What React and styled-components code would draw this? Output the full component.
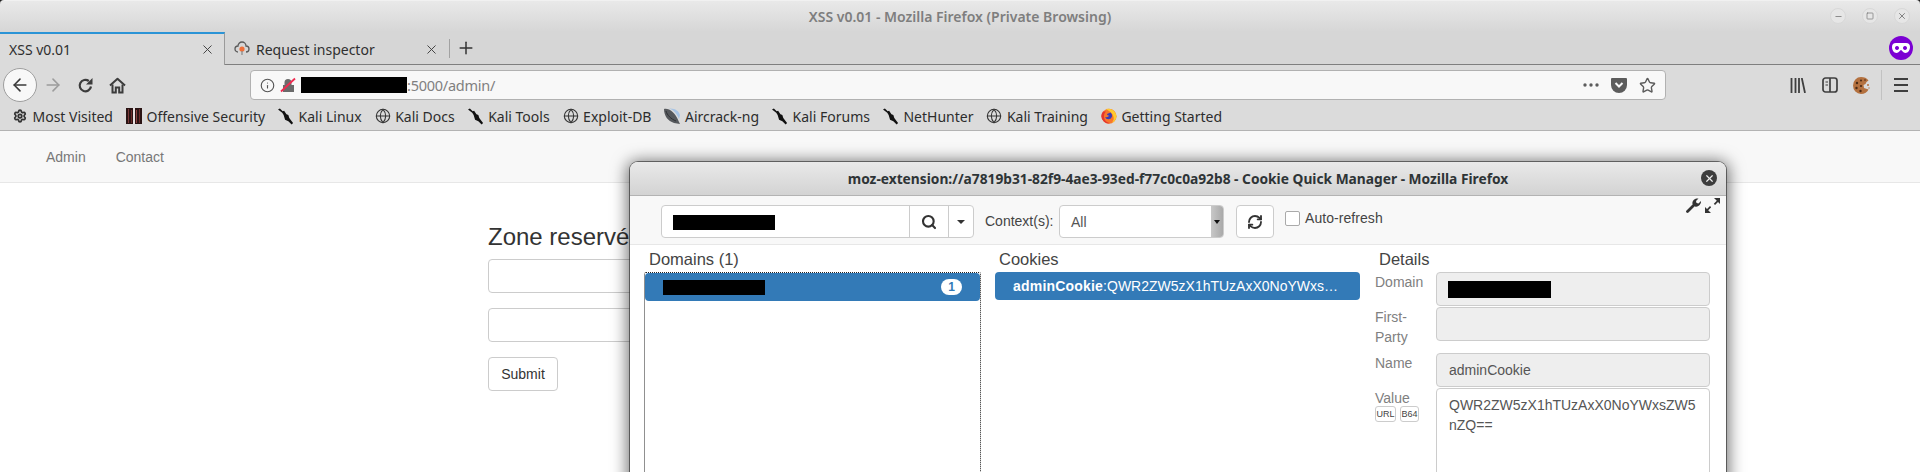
import React from 'react';
import styled, { createGlobalStyle } from 'styled-components';
import { ArrowLeft, ArrowRight, Info, Star, X, Plus, Minus, Square, Settings, Globe, Search, RefreshCw } from 'lucide-react';

const Global = createGlobalStyle`
  html, body { margin: 0; padding: 0; background: #fff; }
  * { box-sizing: border-box; }
`;
const Page = styled.div`
  position: relative; width: 1920px; height: 472px; overflow: hidden;
  font-family: "Liberation Sans", Arial, sans-serif; font-size: 14px; color: #333; background: #fff;
`;
const Chrome = styled.div`
  font-family: "Noto Sans", sans-serif; background: #dbdbdb; border-bottom: 1px solid #b3b3b3;
`;
const TitleFrame = styled.div`background: #1c1c1c;`;
const TitleBar = styled.div`
  position: relative; height: 32px; display: flex; align-items: center; justify-content: center;
  background: linear-gradient(#e9e9e9, #d6d6d6); border-top: 1px solid #f1f1f1; border-radius: 4px 4px 0 0;
`;
const TitleText = styled.div`
  font-size: 14px; font-weight: 600; color: #7e7e7e;
`;
const WindowControls = styled.div`
  position: absolute; right: 10px; top: 7px; display: flex; gap: 16px;
`;
const WindowButton = styled.div`
  width: 16px; height: 16px; border-radius: 50%; background: #e6e6e6; border: 1px solid #d8d8d8;
  display: flex; align-items: center; justify-content: center; color: #6f6f6f;
`;
const TabBar = styled.div`
  height: 33px; display: flex; align-items: stretch; background: #d6d6d6; border-bottom: 1px solid #7f7f7f;
`;
const Tab = styled.div`
  width: ${p => p.$width}px; height: ${p => p.$active ? 33 : 32}px; display: flex; align-items: center;
  padding: 0 9px; font-size: 14px; color: #2f2f2f; gap: 6px; z-index: 1;
  background: ${p => p.$active ? '#dbdbdb' : 'transparent'};
  border-top: ${p => p.$active ? '2px solid #2b94d6' : '2px solid transparent'};
  border-right: ${p => p.$active ? '1px solid #9a9a9a' : '1px solid transparent'};
`;
const TabTitle = styled.span`flex: 1;`;
const TabClose = styled.span`display: flex; color: #3c3c3c;`;
const TabDivider = styled.div`width: 1px; height: 19px; align-self: center; background: #a2a2a2;`;
const NewTab = styled.div`width: 32px; display: flex; align-items: center; justify-content: center; color: #333;`;
const PrivateSlot = styled.div`margin-left: auto; margin-right: 7px; display: flex; align-items: center;`;
const PrivateMask = styled.div`
  width: 24px; height: 24px; border-radius: 50%; background: #7b00d3; display: flex; align-items: center; justify-content: center;
`;
const NavRow = styled.div`height: 40px; display: flex; align-items: center; padding-left: 3px;`;
const BackButton = styled.div`
  width: 34px; height: 34px; border-radius: 50%; background: #f8f8f8; border: 1px solid #9e9e9e;
  display: flex; align-items: center; justify-content: center; color: #3a3a3a;
`;
const NavButton = styled.div`
  width: 32px; height: 32px; display: flex; align-items: center; justify-content: center;
  color: ${p => p.$disabled ? '#9c9c9c' : '#3c3c3c'};
`;
const AddressBar = styled.div`
  margin-left: 117px; width: 1416px; height: 30px; background: #f8f8f8; border: 1px solid #b1b1b1; border-radius: 4px;
  display: flex; align-items: center; padding: 0 4px 0 9px; color: #7f7f7f;
`;
const InfoSlot = styled.span`display: flex; width: 20px; color: #555;`;
const LockSlot = styled.span`display: flex; width: 21px;`;
const Redacted = styled.div`
  width: ${p => p.$w}px; height: ${p => p.$h}px; background: #000; flex: none;
`;
const AddressTail = styled.span`color: #808080; font-size: 14.500px; letter-spacing: -0.25px;`;
const AddressActions = styled.div`margin-left: auto; display: flex; align-items: center;`;
const ActionSlot = styled.div`width: 28px; display: flex; justify-content: center; align-items: center; color: #5c5c5c;`;
const RightTools = styled.div`margin-left: auto; padding-right: 3px; display: flex; align-items: center;`;
const ToolDivider = styled.div`width: 1px; height: 30px; background: #c2c2c2; margin: 0 3px;`;
const BookmarkRow = styled.div`height: 25px; padding: 0 0 3px 12px; display: flex; align-items: center; gap: 13px;`;
const Bookmark = styled.div`display: flex; align-items: center; gap: 4.500px; font-size: 14px; color: #2d2d2d; white-space: nowrap;`;
const BookmarkIcon = styled.span`display: flex; width: 16px; height: 16px; flex: none; color: #333; align-items: center; justify-content: center;`;

const NavBar = styled.div`
  height: 52px; background: #f8f8f8; border-bottom: 1px solid #e7e7e7; display: flex; align-items: center;
  padding-left: 46px; gap: 30px; color: #777;
`;
const FormArea = styled.div`
  padding: 0 0 0 488px; width: 900px;
`;
const Heading = styled.h3`
  margin: 41px 0 9px; font-size: 24px; font-weight: 500; line-height: 26px; color: #333;
`;
const Field = styled.div`
  height: 34px; border: 1px solid #ccc; border-radius: 4px; margin-bottom: 15px; background: #fff;
`;
const SubmitButton = styled.div`
  width: 70px; height: 34px; border: 1px solid #ccc; border-radius: 4px; display: flex; align-items: center; justify-content: center; color: #333;
`;

const Popup = styled.div`
  position: absolute; left: 630px; top: 162px; width: 1096px; height: 420px; background: #fff;
  border-radius: 8px 8px 0 0; box-shadow: 0 2px 16px 3px rgba(0,0,0,.55), 0 0 0 1px rgba(70,70,70,.65);
  overflow: hidden; color: #333;
`;
const PopupTitle = styled.div`
  position: relative; height: 34px; background: linear-gradient(#e9e9e9, #d3d3d3); border-bottom: 1px solid #b3b3b3;
  display: flex; align-items: center; justify-content: center;
  font-family: "Noto Sans", sans-serif; font-weight: 700; font-size: 13.750px; color: #2e3436;
`;
const PopupClose = styled.div`
  position: absolute; right: 9px; top: 8px; width: 16px; height: 16px; border-radius: 50%; background: #3d3d3d; color: #eee;
  display: flex; align-items: center; justify-content: center;
`;
const Toolbar = styled.div`
  height: 49px; background: #f8f8f8; border-bottom: 1px solid #e7e7e7; padding: 9px 6px 0 31px; display: flex; align-items: flex-start;
`;
const SearchGroup = styled.div`
  display: flex; width: 313px; height: 33px; border: 1px solid #ccc; border-radius: 4px; background: #fff;
`;
const SearchInput = styled.div`flex: 1; display: flex; align-items: center; padding-left: 11px; padding-top: 1px;`;
const GroupButton = styled.div`
  width: ${p => p.$w}px; border-left: 1px solid #ccc; display: flex; align-items: center; justify-content: center; color: #333;
`;
const Caret = styled.span`width: 0; height: 0; border-left: 4px solid transparent; border-right: 4px solid transparent; border-top: 4px solid #333;`;
const ContextLabel = styled.span`margin: 8px 0 0 11px; width: 74px; line-height: 16px; color: #444;`;
const ContextSelect = styled.div`
  width: 165px; height: 33px; border: 1px solid #ccc; border-radius: 4px; background: #fff; display: flex; align-items: center; padding-left: 11px; color: #555;
  overflow: hidden; justify-content: space-between;
`;
const SelectArrow = styled.div`
  width: 12px; height: 100%; background: linear-gradient(90deg, #c8c8c8, #a9a9a9); display: flex; align-items: center; justify-content: center;
`;
const SmallCaret = styled.span`width: 0; height: 0; border-left: 3px solid transparent; border-right: 3px solid transparent; border-top: 4px solid #111;`;
const RefreshButton = styled.div`
  margin-left: 12px; width: 38px; height: 33px; border: 1px solid #ccc; border-radius: 4px; background: #fff; display: flex; align-items: center; justify-content: center;
`;
const AutoRefresh = styled.div`margin: 5px 0 0 11px; display: flex; align-items: center; gap: 5px; color: #444; letter-spacing: .06px;`;
const Check = styled.span`width: 15px; height: 15px; background: #fff; border: 1px solid #aaa; border-radius: 2px;`;
const CornerTools = styled.div`margin: -7px 0 0 auto; display: flex; gap: 4px; color: #333;`;
const Columns = styled.div`
  display: grid; grid-template-columns: 337px 366px 335px; column-gap: 14px; padding-left: 14px;
`;
const ColumnLabel = styled.div`
  height: 27px; line-height: 28px; padding-left: ${p => p.$pad}px; font-size: 16.500px; color: #444;
`;
const DomainList = styled.div`
  height: 300px; border: 1px dotted #222; border-radius: 2px;
`;
const SelectedRow = styled.div`
  height: 28px; background: #337ab7; border-radius: 4px; color: #fff; display: flex; align-items: center;
  padding: 0 18px 0 ${p => p.$pad}px; justify-content: space-between; margin-right: ${p => p.$mr || 0}px;
`;
const Badge = styled.span`
  min-width: 21px; height: 16px; border-radius: 10px; background: #fff; color: #337ab7; font-size: 12px; font-weight: 700; text-align: center; line-height: 16px;
`;
const CookieValue = styled.span`white-space: nowrap; overflow: hidden; text-overflow: ellipsis; width: 100%;`;
const CookieName = styled.b`font-weight: 700; letter-spacing: .2px;`;
const DetailGrid = styled.div`display: grid; grid-template-columns: 61px 274px;`;
const DetailLabel = styled.div`line-height: 20px; color: #808080;`;
const ReadOnly = styled.div`
  height: 34px; background: #eee; border: 1px solid #ccc; border-radius: 4px; padding: 0 11px; display: flex; align-items: center; color: #555;
  margin-bottom: ${p => p.$mb}px;
`;
const NameText = styled.span`padding-left: 1px;`;
const ValueBox = styled.div`
  height: 200px; border: 1px solid #ccc; border-radius: 4px; padding: 6px 12px; line-height: 20px; color: #555; word-break: break-all; background: #fff;
`;
const CodecRow = styled.div`display: flex; gap: 4px; margin-top: -2px;`;
const Codec = styled.span`
  width: ${p => p.$w}px; height: 16px; border: 1px solid #ccc; border-radius: 3px; font-size: 9px; line-height: 14px; text-align: center; color: #444;
`;

const Lock = () => (
  <svg width="16" height="16" viewBox="0 0 16 16">
    <path d="M3 15V8h1.500V5.500a3.500 3.500 0 0 1 7 0V8H14v7z" fill="#6a6a6a" />
    <path d="M1 14.500L15 1.500" stroke="#ef2a50" strokeWidth="1.800" />
  </svg>
);
const Reload = () => (
  <svg width="17" height="17" viewBox="0 0 17 17" fill="none">
    <path d="M14 9.500A5.700 5.700 0 1 1 11.800 4" stroke="#3c3c3c" strokeWidth="2.200" />
    <path d="M15.500 1v6.500H9z" fill="#3c3c3c" />
  </svg>
);
const HomeIcon = () => (
  <svg width="17" height="17" viewBox="0 0 17 17" fill="none" stroke="#3c3c3c" strokeWidth="2">
    <path d="M1 8.500L8.500 1.700 16 8.500" strokeLinejoin="round" />
    <path d="M3.500 7.500V15.500H6.800V10.500H10.200V15.500H13.500V7.500" />
  </svg>
);
const Dragon = () => (
  <svg width="17" height="17" viewBox="0 0 17 17">
    <path d="M0 1l2-1 3 3 1.500-.5L9 6l2 1 1 3 4 5.500-1.500 1.500-3.500-3.500-3.500-1.500L6 7 4.500 4.500z" fill="#111" />
  </svg>
);
const OffSec = () => (
  <svg width="16" height="16" viewBox="0 0 16 16">
    <rect width="16" height="16" fill="#2a1414" />
    <rect x="2" y="1" width="1" height="14" fill="#7a3a3a" />
    <rect x="5" y="2" width="1" height="13" fill="#6a2a2a" />
    <rect x="7" y="0" width="2" height="16" fill="#e9dede" />
    <rect x="10" y="2" width="1" height="13" fill="#8a4040" />
    <rect x="13" y="1" width="1" height="14" fill="#6a2a2a" />
  </svg>
);
const Dish = () => (
  <svg width="16" height="16" viewBox="0 0 16 16">
    <path d="M0 1c5-1 11 3 15 13l1 2-6-1C4 13 0 8 0 1z" fill="#55585c" />
    <path d="M5 .500C10 2 13 6 15 11l1-4c-1-4-5-7-11-6.500z" fill="#a8c4e4" />
    <path d="M2 3c1 4 5 8 10 10" stroke="#2e3134" fill="none" />
  </svg>
);
const Firefox = () => (
  <svg width="16" height="16" viewBox="0 0 16 16">
    <circle cx="8" cy="8.300" r="7.500" fill="#f7762c" />
    <path d="M5 1c5-1.500 10 2 10.500 7 0 3-2 6-5 7 2-2 2.500-4 2-6-.5-3-3-5.500-7.500-8z" fill="#ffcb2e" />
    <path d="M9.500 4.500a4 4 0 0 1 1.500 4 3.700 3.700 0 0 1-7 .5c2 .5 3.500 0 4-1.500-1 0-2-.5-2-1.500z" fill="#3a3db5" />
    <path d="M2 3.500A7.500 7.500 0 0 0 2.500 13C4 15 7 16 9 15c-3.500-.5-6-3-6-6.500 0-2 .5-3.500 2-5z" fill="#e5352f" />
  </svg>
);
const Cloud = () => (
  <svg width="16" height="16" viewBox="0 0 16 16">
    <path d="M4 11a3 3 0 0 1 0-6 4 4 0 0 1 8 0 3 3 0 0 1 0 6" fill="none" stroke="#5a5a5a" strokeWidth="1.300" />
    <circle cx="8" cy="8" r="2.600" fill="#f0703a" />
    <path d="M8 10v4" stroke="#777" />
  </svg>
);
const Mask = () => (
  <svg width="18" height="10" viewBox="0 0 18 10">
    <path d="M4 0h10a4 4 0 0 1 4 4c0 3-2 6-4.500 6S10 7 9 7s-2 3-4.500 3S0 7 0 4a4 4 0 0 1 4-4zM5 3a2 2 0 1 0 .01 0zM13 3a2 2 0 1 0 .01 0z" fill="#fff" fillRule="evenodd" />
  </svg>
);
const Pocket = () => (
  <svg width="16" height="16" viewBox="0 0 16 16">
    <path d="M1 1h14a1 1 0 0 1 1 1v6a8 8 0 0 1-16 0V2a1 1 0 0 1 1-1z" fill="#5c5c5c" />
    <path d="M4.500 6L8 9.500 11.500 6" stroke="#f8f8f8" strokeWidth="2" fill="none" />
  </svg>
);
const Library = () => (
  <svg width="16" height="15" viewBox="0 0 16 15" stroke="#3f3f3f" strokeWidth="1.800" fill="none">
    <path d="M1.500 0v15M5.500 0v15M9 0v15M11.800 0l3.200 15" />
  </svg>
);
const SidebarIcon = () => (
  <svg width="16" height="16" viewBox="0 0 16 16" fill="none" stroke="#3f3f3f">
    <rect x="1" y="1" width="14" height="14" rx="2.500" strokeWidth="1.700" />
    <path d="M8 1v14" strokeWidth="1.700" />
    <path d="M3.500 5H6M3.500 8H6" strokeWidth="1.200" />
  </svg>
);
const CookieJar = () => (
  <svg width="18" height="17" viewBox="0 0 18 17">
    <path d="M8 0c3 0 6 1 7.500 3.500l-2 1.500-1 2-2 1 .5 3 3 1 1.500.5C14.500 15 11.500 17 8 17A8 8.500 0 0 1 8 0z" fill="#b4713f" />
    <circle cx="4" cy="6" r="1.200" fill="#4a2a15" /><circle cx="8" cy="3.500" r="1" fill="#4a2a15" />
    <circle cx="3.500" cy="11" r="1.200" fill="#4a2a15" /><circle cx="8" cy="9" r="1.100" fill="#4a2a15" />
    <circle cx="7.500" cy="14" r="1.200" fill="#4a2a15" /><circle cx="12" cy="3" r=".8" fill="#4a2a15" />
    <circle cx="15" cy="8" r="1" fill="#b4713f" /><circle cx="16" cy="11" r=".7" fill="#b4713f" />
  </svg>
);
const Burger = () => (
  <svg width="14" height="14" viewBox="0 0 14 14" fill="#3f3f3f">
    <rect y="0" width="14" height="2" /><rect y="6" width="14" height="2" /><rect y="12" width="14" height="2" />
  </svg>
);
const Dots = () => (
  <svg width="16" height="4" viewBox="0 0 16 4" fill="#5c5c5c">
    <circle cx="2" cy="2" r="1.700" /><circle cx="8" cy="2" r="1.700" /><circle cx="14" cy="2" r="1.700" />
  </svg>
);
const WrenchIcon = () => (
  <svg width="15" height="15" viewBox="0 0 15 15">
    <path d="M1.500 13.500L8 7" stroke="#333" strokeWidth="2.800" strokeLinecap="round" />
    <path d="M6.500 6C5.800 2.500 9 0 12.500.5L10 3l.5 2 2 .5L15 3c.5 3-2.500 6.500-6 5.500z" fill="#333" />
  </svg>
);
const ExpandArrows = () => (
  <svg width="15" height="15" viewBox="0 0 15 15" fill="#333">
    <path d="M9 0h6v6l-2-2-3 3-1.200-1.200 3-3zM6 15H0V9l2 2 3-3 1.200 1.200-3 3z" />
  </svg>
);

const bookmarks = [
  ['Most Visited', <Settings size={14} strokeWidth={3} />],
  ['Offensive Security', <OffSec />],
  ['Kali Linux', <Dragon />],
  ['Kali Docs', <Globe size={16} strokeWidth={1.6} />],
  ['Kali Tools', <Dragon />],
  ['Exploit-DB', <Globe size={16} strokeWidth={1.6} />],
  ['Aircrack-ng', <Dish />],
  ['Kali Forums', <Dragon />],
  ['NetHunter', <Dragon />],
  ['Kali Training', <Globe size={16} strokeWidth={1.6} />],
  ['Getting Started', <Firefox />],
];

export default function App() {
  return (
    <Page>
      <Global />
      <Chrome>
        <TitleFrame>
          <TitleBar>
            <TitleText>XSS v0.01 - Mozilla Firefox (Private Browsing)</TitleText>
            <WindowControls>
              <WindowButton><Minus size={9} /></WindowButton>
              <WindowButton><Square size={8} /></WindowButton>
              <WindowButton><X size={10} /></WindowButton>
            </WindowControls>
          </TitleBar>
        </TitleFrame>
        <TabBar>
          <Tab $active $width={225}>
            <TabTitle>XSS v0.01</TabTitle>
            <TabClose><X size={15} strokeWidth={1.5} /></TabClose>
          </Tab>
          <Tab $width={224}>
            <Cloud />
            <TabTitle>Request inspector</TabTitle>
            <TabClose><X size={15} strokeWidth={1.5} /></TabClose>
          </Tab>
          <TabDivider />
          <NewTab><Plus size={20} strokeWidth={1.8} /></NewTab>
          <PrivateSlot><PrivateMask><Mask /></PrivateMask></PrivateSlot>
        </TabBar>
        <NavRow>
          <BackButton><ArrowLeft size={20} strokeWidth={1.9} /></BackButton>
          <NavButton $disabled><ArrowRight size={20} strokeWidth={1.9} /></NavButton>
          <NavButton><Reload /></NavButton>
          <NavButton><HomeIcon /></NavButton>
          <AddressBar>
            <InfoSlot><Info size={15} strokeWidth={1.8} /></InfoSlot>
            <LockSlot><Lock /></LockSlot>
            <Redacted $w={106} $h={16} />
            <AddressTail>:5000/admin/</AddressTail>
            <AddressActions>
              <ActionSlot><Dots /></ActionSlot>
              <ActionSlot><Pocket /></ActionSlot>
              <ActionSlot><Star size={17} strokeWidth={2} /></ActionSlot>
            </AddressActions>
          </AddressBar>
          <RightTools>
            <NavButton><Library /></NavButton>
            <NavButton><SidebarIcon /></NavButton>
            <NavButton><CookieJar /></NavButton>
            <ToolDivider />
            <NavButton><Burger /></NavButton>
          </RightTools>
        </NavRow>
        <BookmarkRow>
          {bookmarks.map(([label, icon]) => (
            <Bookmark key={label}><BookmarkIcon>{icon}</BookmarkIcon>{label}</Bookmark>
          ))}
        </BookmarkRow>
      </Chrome>
      <NavBar><span>Admin</span><span>Contact</span></NavBar>
      <FormArea>
        <Heading>Zone reservée</Heading>
        <Field />
        <Field />
        <SubmitButton>Submit</SubmitButton>
      </FormArea>
      <Popup>
        <PopupTitle>
          moz-extension://a7819b31-82f9-4ae3-93ed-f77c0c0a92b8 - Cookie Quick Manager - Mozilla Firefox
          <PopupClose><X size={11} strokeWidth={2.6} /></PopupClose>
        </PopupTitle>
        <Toolbar>
          <SearchGroup>
            <SearchInput><Redacted $w={102} $h={15} /></SearchInput>
            <GroupButton $w={39}><Search size={16} strokeWidth={3.2} /></GroupButton>
            <GroupButton $w={25}><Caret /></GroupButton>
          </SearchGroup>
          <ContextLabel>Context(s):</ContextLabel>
          <ContextSelect>All<SelectArrow><SmallCaret /></SelectArrow></ContextSelect>
          <RefreshButton><RefreshCw size={16} strokeWidth={2.8} /></RefreshButton>
          <AutoRefresh><Check />Auto-refresh</AutoRefresh>
          <CornerTools>
            <WrenchIcon />
            <ExpandArrows />
          </CornerTools>
        </Toolbar>
        <Columns>
          <div>
            <ColumnLabel $pad={5}>Domains (1)</ColumnLabel>
            <DomainList>
              <SelectedRow $pad={18}><Redacted $w={102} $h={15} /><Badge>1</Badge></SelectedRow>
            </DomainList>
          </div>
          <div>
            <ColumnLabel $pad={4}>Cookies</ColumnLabel>
            <SelectedRow $pad={18} $mr={1}>
              <CookieValue><CookieName>adminCookie</CookieName>:QWR2ZW5zX1hTUzAxX0NoYWxsZW5nZQ==</CookieValue>
            </SelectedRow>
          </div>
          <div>
            <ColumnLabel $pad={4}>Details</ColumnLabel>
            <DetailGrid>
              <DetailLabel>Domain</DetailLabel>
              <ReadOnly $mb={1}><Redacted $w={103} $h={17} /></ReadOnly>
              <DetailLabel>First-<br />Party</DetailLabel>
              <ReadOnly $mb={12} />
              <DetailLabel>Name</DetailLabel>
              <ReadOnly $mb={1}><NameText>adminCookie</NameText></ReadOnly>
              <div>
                <DetailLabel>Value</DetailLabel>
                <CodecRow><Codec $w={21}>URL</Codec><Codec $w={19}>B64</Codec></CodecRow>
              </div>
              <ValueBox>QWR2ZW5zX1hTUzAxX0NoYWxsZW5nZQ==</ValueBox>
            </DetailGrid>
          </div>
        </Columns>
      </Popup>
    </Page>
  );
}
